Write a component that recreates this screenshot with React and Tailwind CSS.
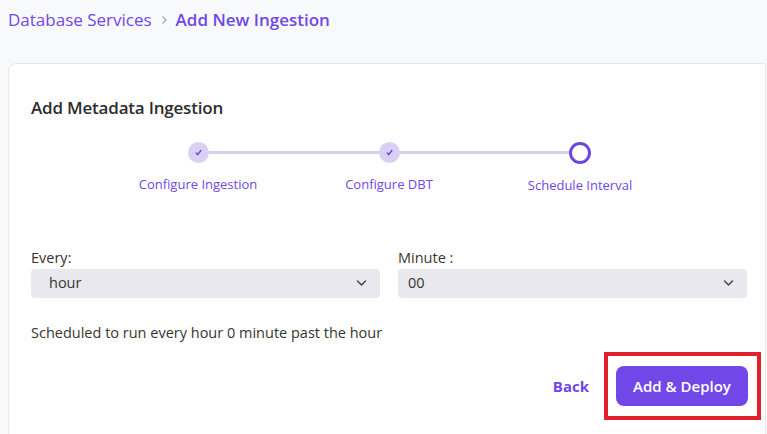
import React from 'react';

const font = { fontFamily: '"Open Sans", "Noto Sans", sans-serif' };

function Check() {
  return (
    <svg className="w-[9px] h-[9px]" viewBox="0 0 10 10" fill="none" stroke="#6b46e0" strokeWidth={1.6} strokeLinecap="round">
      <path d="M2.5 5.6l1.6 1.7L7.6 2.8" />
    </svg>
  );
}

function Step({ label, done }) {
  return (
    <div className="relative flex flex-col items-center w-[191px]">
      {done ? (
        <div className="z-10 flex items-center justify-center w-[21px] h-[21px] rounded-full bg-[#d9d1f4]">
          <Check />
        </div>
      ) : (
        <div className="z-10 w-[22px] h-[22px] rounded-full border-[3px] border-[#6b46e0] bg-white" />
      )}
      <span className="mt-[15px] text-[13px] leading-none text-[#7147e8]">{label}</span>
    </div>
  );
}

function Select({ label, value, pad }) {
  return (
    <div className="flex flex-col flex-1">
      <label className="text-[14.5px] leading-none text-[#37352f] mb-[3px]">{label}</label>
      <div className={`relative flex items-center h-[29px] rounded-[4px] bg-[#e8e8ee] ${pad} text-[14.5px] text-[#37352f]`}>
        {value}
        <svg className="absolute right-[13px] top-[10px] w-[11px] h-[8px]" viewBox="0 0 11 8" fill="none" stroke="#444" strokeWidth={1.5} strokeLinecap="round" strokeLinejoin="round">
          <path d="M1.5 2l4 4 4-4" />
        </svg>
      </div>
    </div>
  );
}

export default function App() {
  return (
    <div className="w-[767px] h-[434px] overflow-hidden bg-[#f8f9fa]" style={font}>
      <div className="flex items-center h-[40px] pl-[8px] text-[17px] text-[#7147e8]">
        <span>Database Services</span>
        <svg className="ml-[9px] mr-[8px] w-[7px] h-[10px]" viewBox="0 0 7 10" fill="none" stroke="#9ca3af" strokeWidth={1.2}>
          <path d="M1.5 1.5l3.5 3.5-3.5 3.5" />
        </svg>
        <span className="font-semibold">Add New Ingestion</span>
      </div>
      <div className="ml-[8px] mr-[1px] mt-[23px] h-[380px] bg-white border border-[#e8e9ee] rounded-tl-[8px] pl-[22px] pr-[18px] pt-[35px]">
        <h1 className="text-[17px] font-semibold leading-none text-[#2d2d2d] tracking-[-0.2px]">Add Metadata Ingestion</h1>
        <div className="relative flex justify-center mt-[26px]">
          <div className="absolute top-[9px] left-[167px] w-[382px] h-[3px] bg-[#d7cff0]" />
          <Step label="Configure Ingestion" done />
          <Step label="Configure DBT" done />
          <Step label="Schedule Interval" />
        </div>
        <div className="flex gap-[18px] mt-[59px]">
          <Select label="Every:" value="hour" pad="pl-[18px]" />
          <Select label="Minute :" value="00" pad="pl-[10px]" />
        </div>
        <p className="mt-[28px] text-[14.5px] leading-none text-[#37352f]">
          Scheduled to run every hour 0 minute past the hour
        </p>
        <div className="flex items-center justify-end mt-[12px] mr-[-14px]">
          <button className="text-[15px] font-bold text-[#7147e8] mr-[15px]">Back</button>
          <div className="border-[4px] border-[#e0212b] pl-[8px] pr-[9px] py-[10px]">
            <button className="w-[132px] h-[40px] rounded-[8px] bg-[#7147e8] text-white text-[15px] font-semibold">
              Add &amp; Deploy
            </button>
          </div>
        </div>
      </div>
    </div>
  );
}
